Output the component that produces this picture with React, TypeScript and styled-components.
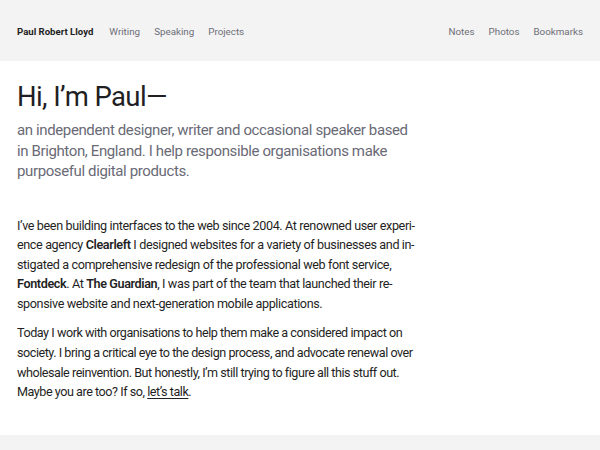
import React from "react";
import styled, { createGlobalStyle } from "styled-components";

const Global = createGlobalStyle`
  html, body { margin: 0; padding: 0; background: #fff; }
  body { font-family: Roboto, "Noto Sans", sans-serif; color: #1f1f24; -webkit-font-smoothing: antialiased; }
`;

const Page = styled.div`
  display: flex;
  flex-direction: column;
  min-height: 450px;
`;

const Header = styled.header`
  height: 61px;
  box-sizing: border-box;
  padding: 1px 17px 0;
  background: #f3f3f3;
  display: flex;
  align-items: center;
  justify-content: space-between;
`;

const Nav = styled.nav`
  display: flex;
  align-items: center;
  gap: 14px;
`;

const Brand = styled.a`
  font-size: 9.6px;
  font-weight: 700;
  color: #1f1f24;
  text-decoration: none;
  margin-right: 2px;
`;

const NavLink = styled.a`
  font-size: 9.8px;
  color: #6e6e78;
  text-decoration: none;
`;

const Main = styled.main`
  padding: 19px 17px 23px;
  flex: 1;
`;

const Title = styled.h1`
  font-size: 27.5px;
  font-weight: 400;
  line-height: 34px;
  margin: 0;
  color: #1f1f24;
  letter-spacing: -0.6px;
`;

const Lead = styled.p`
  font-size: 15px;
  line-height: 20.5px;
  letter-spacing: -0.38px;
  color: #6a6a76;
  margin: 6px 0 0;
  width: 396px;
`;

const Body = styled.div`
  margin-top: 34px;
  width: 440px;
`;

const Para = styled.p<{ $tight?: boolean }>`
  font-size: 12.6px;
  line-height: 19.6px;
  letter-spacing: ${(p) => (p.$tight ? "-0.46px" : "-0.38px")};
  margin: 0 0 10px;
  color: #1f1f24;
`;

const Strong = styled.strong`
  font-weight: 600;
`;

const Talk = styled.a`
  color: inherit;
  text-decoration: underline;
  text-decoration-thickness: 1px;
  text-underline-offset: 2px;
`;

const Footer = styled.footer`
  height: 16px;
  background: #f3f3f3;
`;

export default function App() {
  return (
    <Page>
      <Global />
      <Header>
        <Nav>
          <Brand>Paul Robert Lloyd</Brand>
          <NavLink>Writing</NavLink>
          <NavLink>Speaking</NavLink>
          <NavLink>Projects</NavLink>
        </Nav>
        <Nav>
          <NavLink>Notes</NavLink>
          <NavLink>Photos</NavLink>
          <NavLink>Bookmarks</NavLink>
        </Nav>
      </Header>
      <Main>
        <Title>Hi, I’m Paul—</Title>
        <Lead>
          an independent designer, writer and occasional speaker based in
          Brighton, England. I help responsible organisations make purposeful
          digital products.
        </Lead>
        <Body>
          <Para>
            I’ve been building interfaces to the web since 2004. At renowned user experi-
            <br />
            ence agency <Strong>Clearleft</Strong> I designed websites for a variety of businesses and in-
            <br />
            stigated a comprehensive redesign of the professional web font service,
            <br />
            <Strong>Fontdeck</Strong>. At <Strong>The Guardian</Strong>, I was part of the team that launched their re-
            <br />
            sponsive website and next-generation mobile applications.
          </Para>
          <Para $tight>
            Today I work with organisations to help them make a considered impact on
            <br />
            society. I bring a critical eye to the design process, and advocate renewal over
            <br />
            wholesale reinvention. But honestly, I’m still trying to figure all this stuff out.
            <br />
            Maybe you are too? If so, <Talk>let’s talk</Talk>.
          </Para>
        </Body>
      </Main>
      <Footer />
    </Page>
  );
}
